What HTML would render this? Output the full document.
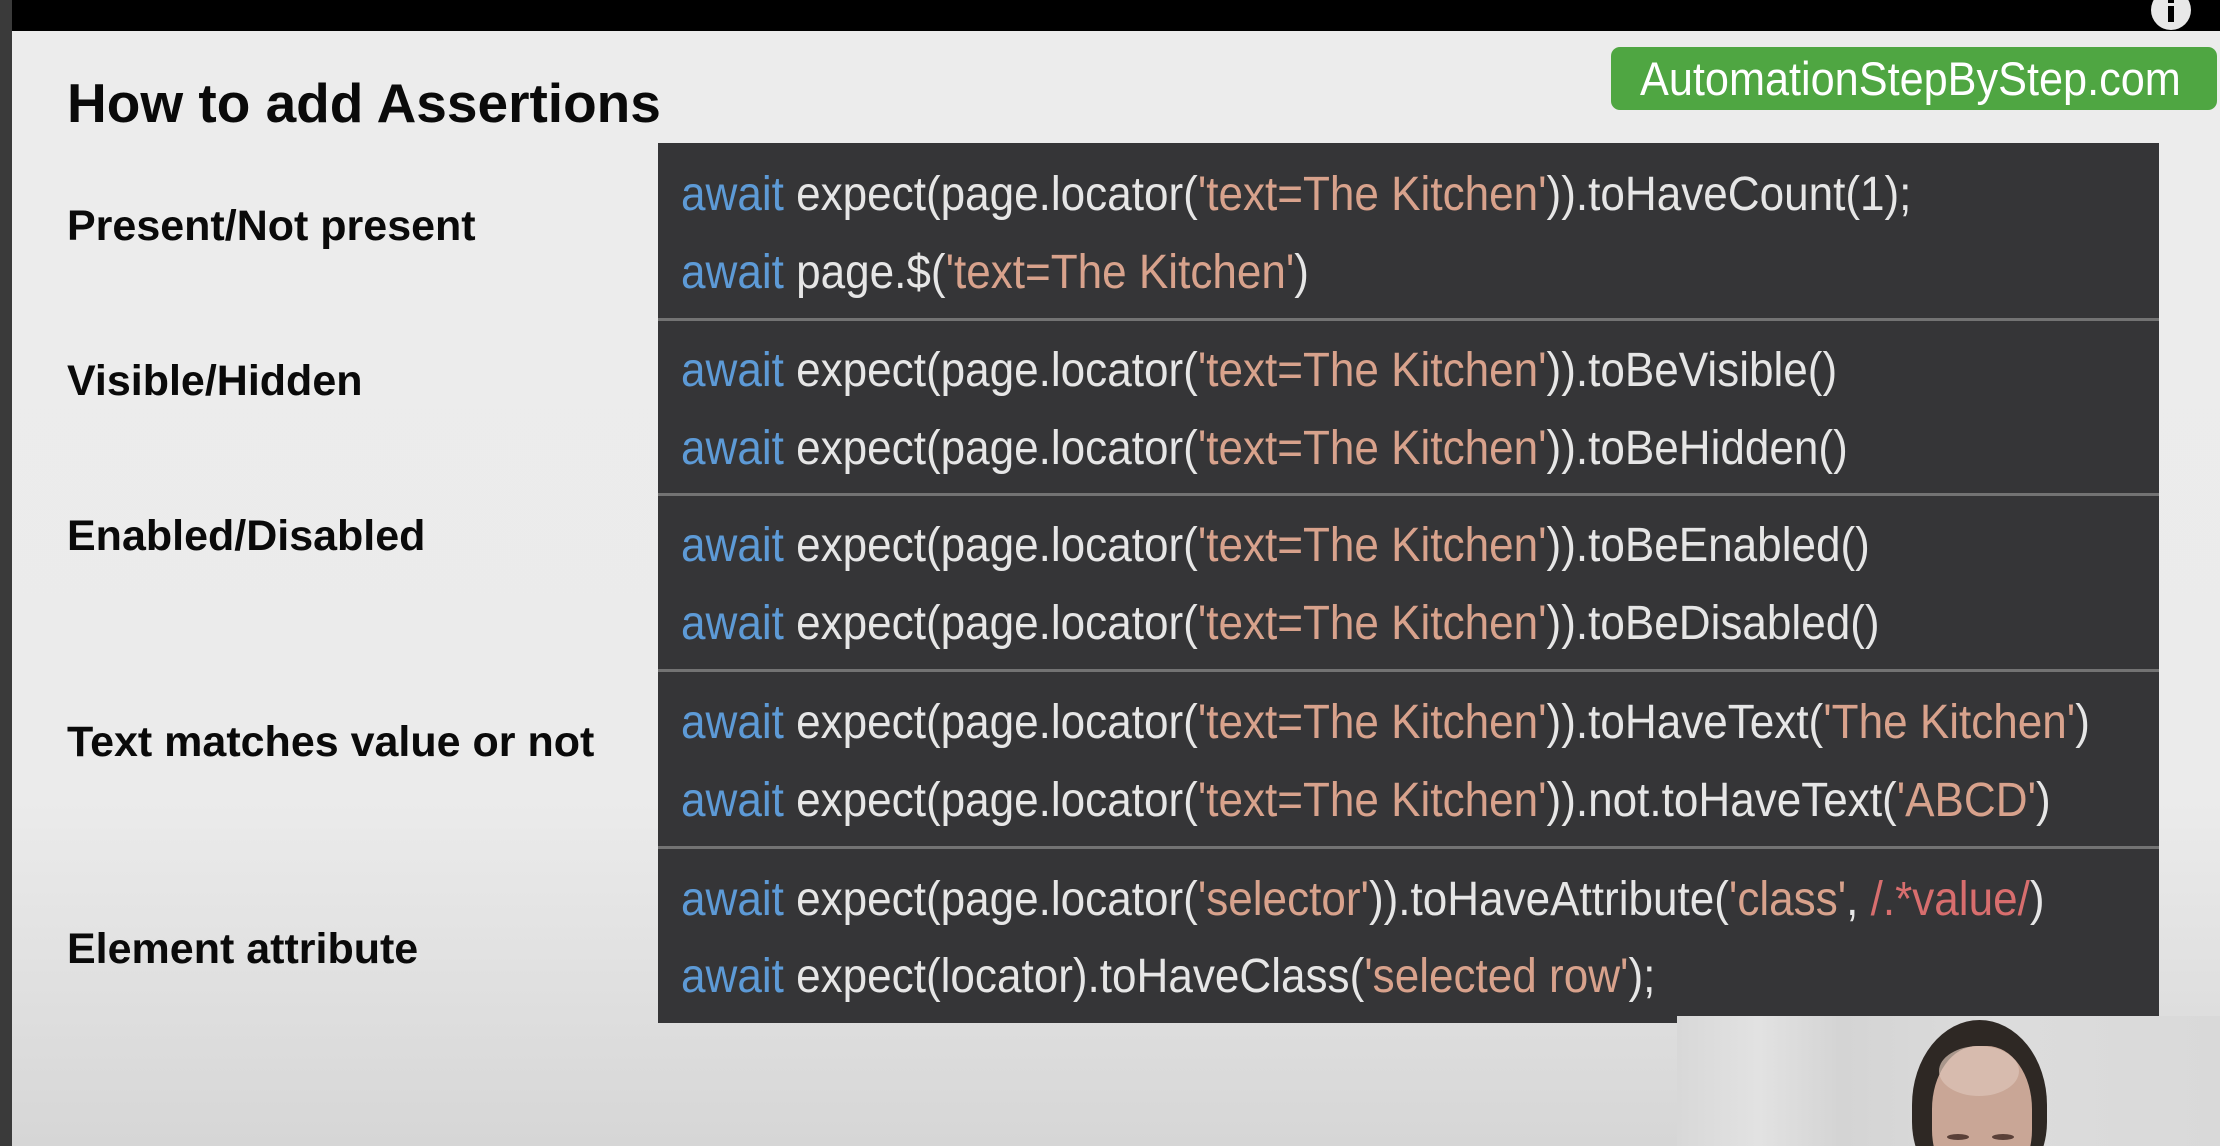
<!DOCTYPE html>
<html><head><meta charset="utf-8"><style>
html,body{margin:0;padding:0}
body{width:2220px;height:1146px;position:relative;overflow:hidden;background:linear-gradient(#ececec 0%,#ebebeb 70%,#d6d6d6 100%);font-family:"Liberation Sans",sans-serif}
.a{position:absolute;white-space:nowrap;line-height:1}
.lbl{font-weight:bold;font-size:43px;color:#0a0a0a;left:67px}
.code{position:absolute;left:658px;top:143px;width:1501px;height:880px;background:#353537}
.div{position:absolute;left:658px;width:1501px;height:3px;background:#737373}
.ln{font-size:48px;color:#e6e6e6;left:681px;transform:scaleX(0.918);transform-origin:0 0}
.k{color:#5d9ad6}.s{color:#d8a28c}.r{color:#d86e6e}
</style></head><body>
<div style="position:absolute;left:0;top:0;width:2220px;height:31px;background:#000"></div>
<div style="position:absolute;left:0;top:0;width:12px;height:1146px;background:#3a3a3a"></div>
<div style="position:absolute;left:2151px;top:-10px;width:40px;height:40px;border-radius:50%;background:#e8e8e8"></div>
<div style="position:absolute;left:2168px;top:6px;width:6px;height:16px;background:#000"></div>
<div style="position:absolute;left:2168px;top:-2px;width:6px;height:5px;background:#000"></div>

<div class="a" style="left:67px;top:76px;font-size:55px;font-weight:bold;color:#0a0a0a">How to add Assertions</div>

<div style="position:absolute;left:1611px;top:47px;width:606px;height:63px;border-radius:9px;background:#4fa642"></div>
<div class="a" style="left:1640px;top:55px;font-size:47px;color:#fff;transform:scaleX(0.92);transform-origin:0 0">AutomationStepByStep.com</div>

<div class="a lbl" style="top:205px">Present/Not present</div>
<div class="a lbl" style="top:360px">Visible/Hidden</div>
<div class="a lbl" style="top:515px">Enabled/Disabled</div>
<div class="a lbl" style="top:721px">Text matches value or not</div>
<div class="a lbl" style="top:928px">Element attribute</div>

<div class="code"></div>
<div class="div" style="top:318px"></div>
<div class="div" style="top:493px"></div>
<div class="div" style="top:669px"></div>
<div class="div" style="top:846px"></div>

<div class="a ln" style="top:171px"><span class="k">await</span> expect(page.locator(<span class="s">'text=The Kitchen'</span>)).toHaveCount(1);</div>
<div class="a ln" style="top:249px"><span class="k">await</span> page.$(<span class="s">'text=The Kitchen'</span>)</div>
<div class="a ln" style="top:347px"><span class="k">await</span> expect(page.locator(<span class="s">'text=The Kitchen'</span>)).toBeVisible()</div>
<div class="a ln" style="top:425px"><span class="k">await</span> expect(page.locator(<span class="s">'text=The Kitchen'</span>)).toBeHidden()</div>
<div class="a ln" style="top:522px"><span class="k">await</span> expect(page.locator(<span class="s">'text=The Kitchen'</span>)).toBeEnabled()</div>
<div class="a ln" style="top:600px"><span class="k">await</span> expect(page.locator(<span class="s">'text=The Kitchen'</span>)).toBeDisabled()</div>
<div class="a ln" style="top:699px"><span class="k">await</span> expect(page.locator(<span class="s">'text=The Kitchen'</span>)).toHaveText(<span class="s">'The Kitchen'</span>)</div>
<div class="a ln" style="top:777px"><span class="k">await</span> expect(page.locator(<span class="s">'text=The Kitchen'</span>)).not.toHaveText(<span class="s">'ABCD'</span>)</div>
<div class="a ln" style="top:876px"><span class="k">await</span> expect(page.locator(<span class="s">'selector'</span>)).toHaveAttribute(<span class="s">'class'</span>, <span class="r">/.*value/</span>)</div>
<div class="a ln" style="top:953px"><span class="k">await</span> expect(locator).toHaveClass(<span class="s">'selected row'</span>);</div>

<div style="position:absolute;left:1677px;top:1016px;width:543px;height:130px;background:linear-gradient(90deg,#d8d8d8 0%,#e2e2e2 15%,#d4d4d4 30%,#dcdcdc 60%,#d9d9d9 100%);overflow:hidden">
  <div style="position:absolute;left:235px;top:4px;width:135px;height:170px;border-radius:50% 50% 40% 40%;background:#2e2824"></div>
  <div style="position:absolute;left:255px;top:30px;width:100px;height:140px;border-radius:45% 45% 40% 40%;background:#c9a696"></div>
  <div style="position:absolute;left:262px;top:30px;width:80px;height:50px;border-radius:50%;background:#ddc4b8;opacity:.7"></div>
  <div style="position:absolute;left:270px;top:118px;width:22px;height:6px;border-radius:50%;background:#5a4038"></div>
  <div style="position:absolute;left:315px;top:118px;width:22px;height:6px;border-radius:50%;background:#5a4038"></div>
</div>
</body></html>
